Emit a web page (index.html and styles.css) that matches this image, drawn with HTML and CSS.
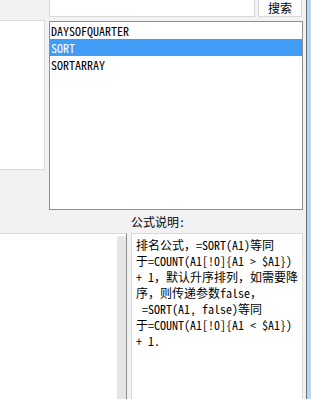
FILE: index.html
```html
<!DOCTYPE html>
<html lang="zh-CN">
<head>
  <meta charset="UTF-8" />
  <meta name="viewport" content="width=device-width, initial-scale=1" />
  <title>公式</title>
  <link rel="stylesheet" href="styles.css">
</head>
<body>
  <div class="main">
    <div class="top">
      <div class="side"></div>
      <div class="right">
        <div class="search">
          <input type="text" class="search-input">
          <button class="search-btn">搜索</button>
        </div>
        <div class="list">
          <div class="item">DAYSOFQUARTER</div>
          <div class="item selected">SORT</div>
          <div class="item">SORTARRAY</div>
        </div>
      </div>
    </div>

    <div class="label">公式说明:</div>

    <div class="bottom">
      <div class="params">
        <div class="scroll"></div>
      </div>
      <div class="desc">排名公式，=SORT(A1)等同<br>于=COUNT(A1[!0]{A1 &gt; $A1})<br>+ 1，默认升序排列，如需要降<br>序，则传递参数false，<br>&nbsp;=SORT(A1, false)等同<br>于=COUNT(A1[!0]{A1 &lt; $A1})<br>+ 1.</div>
    </div>
  </div>
  <div class="edge"></div>
</body>
</html>
```

FILE: styles.css
```css
html, body {
  margin: 0;
  height: 100%;
}
body {
  font-family: "Noto Sans Mono CJK SC", "Noto Sans CJK SC", monospace;
  font-size: 12px;
  color: #000;
  background-color: #f2f2f4;
  display: flex;
  overflow: hidden;
}
.main {
  flex: 1;
  display: flex;
  flex-direction: column;
  padding-right: 3px;
}
.edge {
  width: 4px;
  border-left: 1px solid #6b6b6b;
  background: #b6d8f8;
}
.top {
  display: flex;
  height: 210px;
}
.side {
  box-sizing: border-box;
  width: 45px;
  height: 150px;
  margin-top: 20px;
  background: white;
  border: 1px solid #dadada;
  border-left: none;
}
.right {
  flex: 1;
  margin-left: 4px;
  display: flex;
  flex-direction: column;
}
.search {
  display: flex;
  gap: 3px;
  height: 21px;
  margin-top: -4px;
}
.search-input {
  box-sizing: border-box;
  flex: 1;
  height: 21px;
  margin: 0;
  padding: 0 3px;
  border: 1px solid #d9d9d9;
  background: white;
  outline: none;
}
.search-btn {
  box-sizing: border-box;
  width: 44px;
  height: 21px;
  margin: 0 1px 0 0;
  padding: 2px 0 0;
  font: inherit;
  line-height: 14px;
  border: 1px solid #d9d9d9;
  background: #fdfdfd;
}
.list {
  box-sizing: border-box;
  flex: 1;
  margin-top: 4px;
  background: white;
  border: 1px solid #8e8e8e;
}
.item {
  height: 17px;
  line-height: 17px;
  padding-left: 1px;
}
.item.selected {
  background: #409cf5;
  color: white;
}
.label {
  height: 23px;
  line-height: 23px;
  padding-left: 131px;
}
.bottom {
  flex: 1;
  display: flex;
  gap: 4px;
  min-height: 0;
}
.params {
  box-sizing: border-box;
  width: 127px;
  background: white;
  border-top: 1px solid #dadada;
  border-right: 1px solid #8a8a8a;
  display: flex;
  justify-content: flex-end;
  padding-top: 2px;
}
.scroll {
  width: 9px;
  background: #e6e6e6;
  border-radius: 3px 3px 0 0;
}
.desc {
  flex: 1;
  box-sizing: border-box;
  background: white;
  border: 1px solid #d9d9d9;
  border-bottom: none;
  padding: 3px 4px 0 4px;
  line-height: 16px;
  white-space: nowrap;
}
```
